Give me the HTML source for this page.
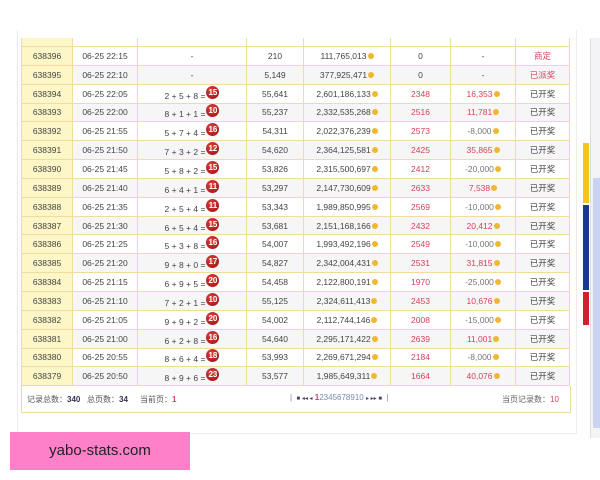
<!DOCTYPE html>
<html><head><meta charset="utf-8">
<style>
body{margin:0;width:600px;height:480px;background:#fff;position:relative;overflow:hidden;font-family:"Liberation Sans","Noto Sans CJK SC",sans-serif;}
.outer{position:absolute;left:17px;top:30px;width:558px;height:403px;border:1px solid #ececec;border-top:none;background:#fff;}
table{position:absolute;left:21px;top:38px;border-collapse:collapse;table-layout:fixed;font-size:8.5px;color:#444;}
td{border:1px solid #f1dca0;height:17.85px;line-height:10px;padding:0;text-align:center;white-space:nowrap;overflow:hidden;}
tr.h td{height:8px;border-top:none}
tr:nth-child(even) td{background:#fff}
tr:nth-child(odd) td{background:#f6f6f6}
tr.h td{background:#fff}
td.id{background:#fdf6c6!important}
.r{color:#d8405a}
.g{color:#777}
.s{position:relative;top:2px;display:inline-block;height:12px;line-height:12px}
.b{display:inline-block;width:13px;height:13px;border-radius:50%;background:radial-gradient(circle at 40% 35%,#e04040,#9a0c0c);color:#fff;font-size:8px;font-weight:bold;line-height:13px;position:relative;top:-4px;margin-left:1px;vertical-align:top}
.c{display:inline-block;width:6px;height:6px;border-radius:50%;background:#f0b830;margin-left:1px}
.foot{position:absolute;left:21px;top:386px;width:548px;height:26px;border:1px solid #f1dca0;border-top:none;font-size:8px;color:#555;}
.pink{position:absolute;left:10px;top:432px;width:180px;height:38px;background:#fd80c8;color:#222;font-size:15px;line-height:38px;text-align:center;}
.sb{position:absolute;left:590px;top:38px;width:10px;height:400px;background:#f4f4f6;border-left:1px solid #ddd}
</style></head><body>
<div class="outer"></div>
<table>
<colgroup><col style="width:51px"><col style="width:65px"><col style="width:109px"><col style="width:57px"><col style="width:87px"><col style="width:60px"><col style="width:65px"><col style="width:54px"></colgroup>
<tr class="h"><td class="id"></td><td></td><td></td><td></td><td></td><td></td><td></td><td></td></tr>
<tr><td class="id">638396</td><td>06-25 22:15</td><td>-</td><td>210</td><td>111,765,013<span class="c"></span></td><td>0</td><td>-</td><td class="r">商定</td></tr>
<tr><td class="id">638395</td><td>06-25 22:10</td><td>-</td><td>5,149</td><td>377,925,471<span class="c"></span></td><td>0</td><td>-</td><td class="r">已派奖</td></tr>
<tr><td class="id">638394</td><td>06-25 22:05</td><td><span class="s">2 + 5 + 8 =<span class="b">15</span></span></td><td>55,641</td><td>2,601,186,133<span class="c"></span></td><td class="r">2348</td><td class="r">16,353<span class="c"></span></td><td>已开奖</td></tr>
<tr><td class="id">638393</td><td>06-25 22:00</td><td><span class="s">8 + 1 + 1 =<span class="b">10</span></span></td><td>55,237</td><td>2,332,535,268<span class="c"></span></td><td class="r">2516</td><td class="r">11,781<span class="c"></span></td><td>已开奖</td></tr>
<tr><td class="id">638392</td><td>06-25 21:55</td><td><span class="s">5 + 7 + 4 =<span class="b">16</span></span></td><td>54,311</td><td>2,022,376,239<span class="c"></span></td><td class="r">2573</td><td class="g">-8,000<span class="c"></span></td><td>已开奖</td></tr>
<tr><td class="id">638391</td><td>06-25 21:50</td><td><span class="s">7 + 3 + 2 =<span class="b">12</span></span></td><td>54,620</td><td>2,364,125,581<span class="c"></span></td><td class="r">2425</td><td class="r">35,865<span class="c"></span></td><td>已开奖</td></tr>
<tr><td class="id">638390</td><td>06-25 21:45</td><td><span class="s">5 + 8 + 2 =<span class="b">15</span></span></td><td>53,826</td><td>2,315,500,697<span class="c"></span></td><td class="r">2412</td><td class="g">-20,000<span class="c"></span></td><td>已开奖</td></tr>
<tr><td class="id">638389</td><td>06-25 21:40</td><td><span class="s">6 + 4 + 1 =<span class="b">11</span></span></td><td>53,297</td><td>2,147,730,609<span class="c"></span></td><td class="r">2633</td><td class="r">7,538<span class="c"></span></td><td>已开奖</td></tr>
<tr><td class="id">638388</td><td>06-25 21:35</td><td><span class="s">2 + 5 + 4 =<span class="b">11</span></span></td><td>53,343</td><td>1,989,850,995<span class="c"></span></td><td class="r">2569</td><td class="g">-10,000<span class="c"></span></td><td>已开奖</td></tr>
<tr><td class="id">638387</td><td>06-25 21:30</td><td><span class="s">6 + 5 + 4 =<span class="b">15</span></span></td><td>53,681</td><td>2,151,168,166<span class="c"></span></td><td class="r">2432</td><td class="r">20,412<span class="c"></span></td><td>已开奖</td></tr>
<tr><td class="id">638386</td><td>06-25 21:25</td><td><span class="s">5 + 3 + 8 =<span class="b">16</span></span></td><td>54,007</td><td>1,993,492,196<span class="c"></span></td><td class="r">2549</td><td class="g">-10,000<span class="c"></span></td><td>已开奖</td></tr>
<tr><td class="id">638385</td><td>06-25 21:20</td><td><span class="s">9 + 8 + 0 =<span class="b">17</span></span></td><td>54,827</td><td>2,342,004,431<span class="c"></span></td><td class="r">2531</td><td class="r">31,815<span class="c"></span></td><td>已开奖</td></tr>
<tr><td class="id">638384</td><td>06-25 21:15</td><td><span class="s">6 + 9 + 5 =<span class="b">20</span></span></td><td>54,458</td><td>2,122,800,191<span class="c"></span></td><td class="r">1970</td><td class="g">-25,000<span class="c"></span></td><td>已开奖</td></tr>
<tr><td class="id">638383</td><td>06-25 21:10</td><td><span class="s">7 + 2 + 1 =<span class="b">10</span></span></td><td>55,125</td><td>2,324,611,413<span class="c"></span></td><td class="r">2453</td><td class="r">10,676<span class="c"></span></td><td>已开奖</td></tr>
<tr><td class="id">638382</td><td>06-25 21:05</td><td><span class="s">9 + 9 + 2 =<span class="b">20</span></span></td><td>54,002</td><td>2,112,744,146<span class="c"></span></td><td class="r">2008</td><td class="g">-15,000<span class="c"></span></td><td>已开奖</td></tr>
<tr><td class="id">638381</td><td>06-25 21:00</td><td><span class="s">6 + 2 + 8 =<span class="b">16</span></span></td><td>54,640</td><td>2,295,171,422<span class="c"></span></td><td class="r">2639</td><td class="r">11,001<span class="c"></span></td><td>已开奖</td></tr>
<tr><td class="id">638380</td><td>06-25 20:55</td><td><span class="s">8 + 6 + 4 =<span class="b">18</span></span></td><td>53,993</td><td>2,269,671,294<span class="c"></span></td><td class="r">2184</td><td class="g">-8,000<span class="c"></span></td><td>已开奖</td></tr>
<tr><td class="id">638379</td><td>06-25 20:50</td><td><span class="s">8 + 9 + 6 =<span class="b">23</span></span></td><td>53,577</td><td>1,985,649,311<span class="c"></span></td><td class="r">1664</td><td class="r">40,076<span class="c"></span></td><td>已开奖</td></tr>
</table>
<div class="foot">
<span style="position:absolute;left:5px;top:8px">记录总数：<b style="color:#335">340</b>&nbsp;&nbsp; 总页数：<b style="color:#335">34</b></span>
<span style="position:absolute;left:118px;top:8px">当前页：<b class="r">1</b></span>
<span style="position:absolute;left:268px;top:7px;color:#888">|&nbsp; <span style="color:#446;font-size:6px">■ ◂◂ ◂</span> <b class="r">1</b><span style="color:#7a8ab0">2345678910</span> <span style="color:#446;font-size:6px">▸ ▸▸ ■</span> &nbsp;|</span>
<span style="position:absolute;left:480px;top:8px;color:#666">当页记录数：<span class="r">10</span></span>
</div>
<div class="sb">
<div style="position:absolute;left:-8px;top:105px;width:6px;height:60px;background:#f5c518"></div>
<div style="position:absolute;left:-8px;top:167px;width:6px;height:85px;background:#1a3a8a"></div>
<div style="position:absolute;left:-8px;top:254px;width:6px;height:33px;background:#d02030"></div>
<div style="position:absolute;left:2px;top:140px;width:8px;height:250px;background:#c8d4f0"></div>
</div>
<div class="pink">yabo-stats.com</div>
</body></html>
